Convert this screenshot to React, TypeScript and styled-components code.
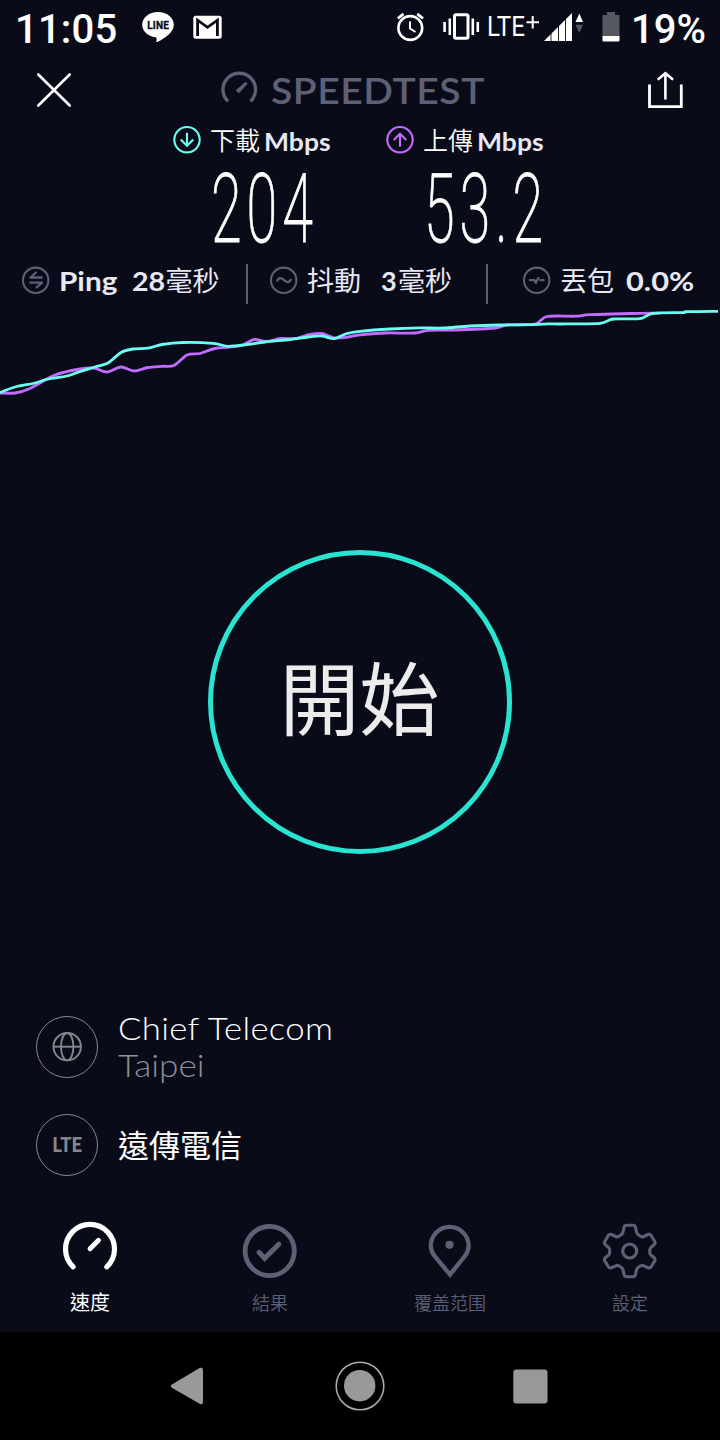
import React from 'react';
import styled, { createGlobalStyle } from 'styled-components';

const color = {
  bg: '#090b19',
  muted: '#5f6076',
  text: '#e8e8f4',
  cyan: '#6afff0',
  purple: '#c46bff',
  ring: '#2ae4d2',
  grey: '#86878d',
};

const latin = "Lato, 'Noto Sans CJK TC', sans-serif";
const cjk = "'Noto Sans CJK TC', sans-serif";

const GlobalStyle = createGlobalStyle`
  *, *::before, *::after { box-sizing: border-box; }
  body { margin: 0; background: ${color.bg}; }
  svg { display: block; flex: none; overflow: visible; }
`;

const Screen = styled.div`
  width: 720px;
  height: 1440px;
  display: flex;
  flex-direction: column;
  overflow: hidden;
  background: ${color.bg};
  color: #fff;
  font-family: ${latin};
`;

type LabelProps = {
  $size: number;
  $width?: number;
  $weight?: number;
  $color?: string;
  $spacing?: number;
  $stretch?: number;
  $family?: string;
};

const Label = styled.span<LabelProps>`
  display: block;
  flex: none;
  width: ${(p) => (p.$width ? `${p.$width}px` : 'auto')};
  font-family: ${(p) => p.$family ?? latin};
  font-size: ${(p) => p.$size}px;
  font-weight: ${(p) => p.$weight ?? 400};
  letter-spacing: ${(p) => p.$spacing ?? 0}px;
  line-height: 1;
  white-space: nowrap;
  color: ${(p) => p.$color ?? '#fff'};
  transform: scaleX(${(p) => p.$stretch ?? 1});
  transform-origin: left center;
`;

/* The CJK face sits low in its line box, so it gets extra space below. */
const CjkLabel = styled(Label).attrs({ $family: cjk })<{ $lift?: number }>`
  margin-top: -${(p) => p.$lift ?? 1}px;
  margin-bottom: ${(p) => p.$lift ?? 1}px;
`;

const StatusBar = styled.header`
  height: 56px;
  flex: none;
  display: flex;
  align-items: flex-start;
  padding: 0 0 0 15px;
`;

const Clock = styled.div`
  width: 127px;
  padding-top: 10px;
`;

const StatusIcons = styled.div`
  width: 238px;
  display: flex;
  gap: 19px;
  padding-top: 11px;
`;

const StatusGlyphs = styled.div`
  padding-top: 12px;
  width: 251px;
`;

const Percent = styled.div`
  padding-top: 10px;
`;

const TitleBar = styled.div`
  height: 68px;
  flex: none;
  display: flex;
  align-items: flex-start;
  padding: 14px 36px 0 36px;
`;

const Brand = styled.div`
  display: flex;
  gap: 13px;
  margin-left: 148px;
  width: 426px;
`;

const BrandName = styled.div`
  padding-top: 2px;
`;

const Results = styled.section`
  height: 140px;
  flex: none;
  display: flex;
  padding-left: 173px;
`;

const Result = styled.div`
  width: 213px;
`;

const ResultHead = styled.div`
  display: flex;
  align-items: center;
  height: 32px;
  gap: 9px;
`;

const ResultName = styled.div`
  display: flex;
  gap: 4px;
  padding-top: 3px;
`;

const Value = styled.div`
  margin-left: 38px;
  padding-top: 4px;
  font-family: Roboto, sans-serif;
  font-weight: 200;
  font-size: 96px;
  line-height: 98px;
  letter-spacing: 8.5px;
  -webkit-text-stroke: 0.9px #fff;
  white-space: nowrap;
  transform: scaleX(0.58);
  transform-origin: left center;
`;

const Metrics = styled.section`
  height: 40px;
  flex: none;
  display: flex;
`;

const Metric = styled.div<{ $width: number; $pad: number; $last?: boolean }>`
  width: ${(p) => p.$width}px;
  height: 40px;
  padding: 2px 0 0 ${(p) => p.$pad}px;
  display: flex;
  align-items: flex-start;
  border-right: ${(p) => (p.$last ? 0 : 2)}px solid ${color.muted};
`;

const MetricTexts = styled.div`
  display: flex;
  padding: 1px 0 0 9px;
`;

const StartArea = styled.main`
  height: 612px;
  flex: none;
  display: flex;
  justify-content: center;
  padding-top: 146px;
`;

const StartButton = styled.button`
  width: 304px;
  height: 304px;
  padding: 0 1px 17px 0;
  border: 5px solid ${color.ring};
  border-radius: 50%;
  background: transparent;
  color: #ececec;
  font: 400 80px/1 ${cjk};
`;

const Servers = styled.section`
  flex: none;
  height: 194px;
  padding-left: 36px;
  display: flex;
  flex-direction: column;
  gap: 36px;
`;

const Server = styled.div`
  height: 62px;
  display: flex;
  align-items: center;
  gap: 20px;
`;

const Badge = styled.div`
  width: 62px;
  height: 62px;
  flex: none;
  display: flex;
  align-items: center;
  justify-content: center;
  border: 1.5px solid ${color.grey};
  border-radius: 50%;
`;

const BadgeText = styled.span`
  padding-bottom: 3px;
  font: 900 20px/1 ${latin};
  color: ${color.grey};
  transform: scaleX(0.93);
`;

const ServerText = styled.div`
  display: flex;
  flex-direction: column;
  gap: 5px;
  padding-bottom: 1px;
`;

const Tabs = styled.nav`
  height: 122px;
  flex: none;
  display: flex;
`;

const Tab = styled.div`
  width: 180px;
  display: flex;
  flex-direction: column;
  align-items: center;
  padding-top: 12px;
`;

const TabName = styled.div`
  height: 28px;
  margin-top: 6px;
  display: flex;
  align-items: center;
`;

const SystemNav = styled.footer`
  height: 108px;
  flex: none;
  display: flex;
  align-items: center;
  padding-left: 170px;
  background: #000;
`;

const NavSlot = styled.div<{ $width: number }>`
  width: ${(p) => p.$width}px;
`;

type Point = [number, number];

const download: Point[] = [
  [0, 392.5], [15, 387], [35, 383], [48, 379], [67, 376], [80, 371.5], [95, 367], [108, 363],
  [121, 352.5], [133, 349], [148, 348.2], [162, 344.5], [183, 342.5], [213, 343.3], [228, 346.3],
  [245, 344.8], [265, 342], [290, 339.5], [308, 337], [322, 336], [334, 338.6], [347, 333.5],
  [360, 331.3], [390, 329], [420, 327.9], [443, 328], [470, 326], [500, 325], [535, 324.6],
  [548, 323.8], [560, 324], [600, 323.3], [613, 319], [640, 318.7], [653, 313.3], [684, 312.6],
  [686, 311.7], [718, 311.3],
];

const upload: Point[] = [
  [0, 393], [15, 393], [30, 388.5], [55, 375], [80, 369], [94, 368], [107, 372], [121, 367],
  [134, 371], [148, 367.5], [162, 366.3], [174, 365.5], [187, 355], [200, 353.5], [215, 348.5],
  [240, 346], [254, 339.5], [267, 341.5], [280, 338.5], [295, 338.5], [310, 334.5], [322, 333.5],
  [335, 338], [348, 337], [360, 334.8], [385, 333], [415, 333], [428, 330.3], [455, 330],
  [495, 328], [507, 325], [535, 324], [547, 316.5], [575, 316.2], [590, 314.7], [630, 313.5],
  [660, 313.1],
];

function curve(points: Point[]) {
  return points.reduce((d, [x, y], i) => {
    if (i === 0) return `M${x} ${y}`;
    const [px, py] = points[i - 1];
    const [bx, by] = points[Math.max(0, i - 2)];
    const [nx, ny] = points[Math.min(points.length - 1, i + 1)];
    const k = 1 / 7;
    return `${d}C${px + (x - bx) * k} ${py + (y - by) * k} ${x - (nx - px) * k} ${y - (ny - py) * k} ${x} ${y}`;
  }, '');
}

function Chart() {
  return (
    <svg width="720" height="100" viewBox="0 304 720 100" fill="none" strokeWidth="2.8">
      <path d={curve(upload)} stroke={color.purple} />
      <path d={curve(download)} stroke={color.cyan} />
    </svg>
  );
}

function LineIcon() {
  return (
    <svg width="32" height="32" viewBox="0 0 32 32">
      <path
        d="M16 1C7.3 1 .2 6.5.2 13.7c0 6.400 5.600 11.600 13.200 12.500 1.600.300 1.300 1.200 1 4.200-.1.700.4.900 1 .6C19.500 28.800 31.800 22.500 31.800 13.700 31.800 6.500 24.700 1 16 1z"
        fill="#fff"
      />
      <text x="16" y="18" textAnchor="middle" textLength="21.500" fontFamily="Roboto, sans-serif" fontWeight="700" fontSize="10" fill={color.bg} stroke={color.bg} strokeWidth=".3">
        LINE
      </text>
    </svg>
  );
}

function MailIcon() {
  return (
    <svg width="29" height="32" viewBox="0 0 29 32">
      <rect x=".3" y="4.700" width="28.400" height="23" rx="2.500" fill="#fff" />
      <path d="M4.600 25V9.200L14.500 16.300 24.400 9.200V25" fill="none" stroke={color.bg} strokeWidth="2.800" />
    </svg>
  );
}

function StatusIndicators() {
  return (
    <svg width="245" height="32" viewBox="380 12 245 32" fill="none" stroke="#fff">
      <circle cx="410.300" cy="28" r="11.900" strokeWidth="2.600" />
      <path d="M410 21.500V28.500L415.500 32" strokeWidth="2" />
      <path d="M397.800 18.500L403.500 13.800M423 18.500L417.300 13.800" strokeWidth="2.800" />
      <rect x="454.500" y="14.800" width="13.500" height="23.500" rx="1.500" strokeWidth="3" />
      <path d="M449.800 18.500V35M472.800 18.500V35" strokeWidth="2.600" />
      <path d="M444.600 22V32M477.800 22V32" strokeWidth="2.600" />
      <text x="487" y="36.200" textLength="38" lengthAdjust="spacingAndGlyphs" fontFamily="Roboto, sans-serif" fontSize="27.500" fill="#fff" stroke="none">
        LTE
      </text>
      <path d="M526.500 22.300H539M532.700 16V28.500" strokeWidth="2" />
      <path d="M544 41L572 13V41z" fill="#fff" stroke="none" />
      <path d="M551 31V41.500M558.500 23V41.500M565.500 17V41.500" stroke={color.bg} strokeWidth=".9" />
      <path d="M575.500 22L579.300 13.500 583 22z" fill="#fff" stroke="none" />
      <path d="M575.500 24.800L579.300 33 583 24.800z" fill="#55565e" stroke="none" />
      <path d="M602.500 15H607V12H615V15H619.500V37H602.500z" fill="#57585f" stroke="none" />
      <path d="M602.500 36H619.500V40.500Q619.500 41.500 618.500 41.500H603.500Q602.500 41.500 602.500 40.500z" fill="#fff" stroke="none" />
    </svg>
  );
}

function CloseIcon() {
  return (
    <svg width="36" height="40" viewBox="0 0 36 40" fill="none" stroke="#fff" strokeWidth="2.600" strokeLinecap="round">
      <path d="M2.300 4.500L33.700 35.500M33.700 4.500L2.300 35.500" />
    </svg>
  );
}

function BrandIcon() {
  return (
    <svg width="38" height="36" viewBox="0 0 38 36" fill="none" stroke={color.muted}>
      <path d="M8 31.300A16.300 16.300 0 1 1 30.500 31.300" strokeWidth="3.400" />
      <path d="M17.800 22.400L15.800 20.300 25.500 11.800 27.600 13.700 18.800 23.200z" fill={color.muted} stroke="none" />
    </svg>
  );
}

function ShareIcon() {
  return (
    <svg width="38" height="40" viewBox="0 0 38 40" fill="none" stroke="#fff" strokeWidth="2.800">
      <path d="M3.500 14.500V36.700H35.300V14.500" />
      <path d="M19.400 28.500V4M12.500 9L19.400 3.300 26.300 9" strokeLinecap="round" strokeWidth="2.600" />
    </svg>
  );
}

function ArrowIcon({ up }: { up?: boolean }) {
  return (
    <svg width="28" height="28" viewBox="0 0 28 28" fill="none" stroke={up ? color.purple : color.cyan} strokeWidth="2.100">
      <circle cx="14" cy="13.700" r="12.700" />
      <path d={up ? 'M14 20.700V8.200M7.700 14L14 7.700 20.300 14' : 'M14 6.700V19.200M7.700 13.400L14 19.700 20.300 13.400'} />
    </svg>
  );
}

const metricPaths = {
  ping: 'M20.500 11.500H8.500L14.500 6M7.500 16.700H20L14 22',
  jitter: 'M6.800 15.200C8.800 11 11.500 11.400 14 14S19.200 17.200 21.200 13',
  loss: 'M6 14.200H11.500L12.800 16.800 15.800 11.300M16.500 14.200H21.500',
};

function MetricIcon({ kind }: { kind: keyof typeof metricPaths }) {
  return (
    <svg width="28" height="28" viewBox="0 0 28 28" fill="none" stroke={color.muted} strokeWidth="2.100">
      <circle cx="13.700" cy="14.300" r="12.700" />
      <path d={metricPaths[kind]} strokeLinejoin="round" strokeWidth="2.300" />
    </svg>
  );
}

function GlobeIcon() {
  return (
    <svg width="30" height="30" viewBox="0 0 30 30" fill="none" stroke={color.grey} strokeWidth="1.900">
      <circle cx="15.200" cy="14.700" r="13.700" />
      <ellipse cx="15.200" cy="14.700" rx="6.200" ry="13.700" />
      <path d="M1.500 14.700H28.900" />
    </svg>
  );
}

function TabIcon({ kind }: { kind: 'speed' | 'results' | 'coverage' | 'settings' }) {
  const stroke = kind === 'speed' ? '#fff' : color.muted;
  return (
    <svg width="60" height="60" viewBox="0 0 60 60" fill="none" stroke={stroke} strokeWidth="4.800" strokeLinecap="round">
      {kind === 'speed' && (
        <>
          <path d="M13.200 44.800A24.500 24.500 0 1 1 46.800 44.800" strokeWidth="5.200" />
          <path d="M30 26.800L38.500 18.300" strokeWidth="4.800" />
        </>
      )}
      {kind === 'results' && (
        <>
          <circle cx="29.700" cy="29" r="24.600" />
          <path d="M19 30.300L24.700 36.300 38.800 22.200" strokeWidth="5" />
        </>
      )}
      {kind === 'coverage' && (
        <>
          <path d="M30 52.600L14.500 34C11.500 30.200 10.800 27.200 10.800 23.800A18.900 18.900 0 0 1 48.600 23.800C48.600 27.200 47.900 30.200 44.900 34z" strokeWidth="4.300" strokeLinecap="butt" />
          <circle cx="29.500" cy="22.800" r="4.100" fill={stroke} stroke="none" />
        </>
      )}
      {kind === 'settings' && (
        <>
          <path
            d="M24 5.500Q24.500 3.300 26.500 3.300H33Q35 3.300 35.500 5.500L36.500 10.200Q37 12 38.700 13L41 14.500Q42 15.100 43.300 14.700L48 12.500Q50 11.800 51.200 13.500L54.700 19.500Q55.800 21.300 54.200 22.700L50.800 25.500Q49.800 26.500 49.800 28V30.500Q49.800 32 50.800 33L54.200 35.700Q55.800 37.100 54.700 38.900L51.200 44.700Q50 46.400 48 45.700L43.300 43.600Q42 43.200 41 43.700L38.700 45Q37 46 36.500 47.800L35.500 52.500Q35 54.700 33 54.700H26.500Q24.500 54.700 24 52.500L23 47.800Q22.500 46 20.800 45L18.500 43.700Q17.500 43.200 16.200 43.600L11.500 45.700Q9.500 46.400 8.300 44.700L4.800 38.900Q3.700 37.100 5.300 35.700L8.700 33Q9.700 32 9.700 30.500V28Q9.700 26.500 8.700 25.500L5.300 22.700Q3.700 21.300 4.800 19.500L8.300 13.500Q9.500 11.800 11.500 12.500L16.200 14.700Q17.500 15.100 18.500 14.500L20.800 13Q22.500 12 23 10.200z"
            strokeWidth="3.100"
          />
          <circle cx="29.700" cy="29" r="7" strokeWidth="3.200" />
        </>
      )}
    </svg>
  );
}

const tabs = [
  { kind: 'speed', name: '速度' },
  { kind: 'results', name: '結果' },
  { kind: 'coverage', name: '覆盖范围' },
  { kind: 'settings', name: '設定' },
] as const;

export default function App() {
  return (
    <Screen>
      <GlobalStyle />
      <StatusBar>
        <Clock>
          <Label $size={40} $weight={500} $family="Roboto, sans-serif" $spacing={0.2}>11:05</Label>
        </Clock>
        <StatusIcons>
          <LineIcon />
          <MailIcon />
        </StatusIcons>
        <StatusGlyphs>
          <StatusIndicators />
        </StatusGlyphs>
        <Percent>
          <Label $size={40} $weight={500} $family="Roboto, sans-serif">19%</Label>
        </Percent>
      </StatusBar>

      <TitleBar>
        <CloseIcon />
        <Brand>
          <BrandIcon />
          <BrandName>
            <Label $size={36} $weight={600} $color={color.muted} $spacing={0.5} $stretch={1.085}>SPEEDTEST</Label>
          </BrandName>
        </Brand>
        <ShareIcon />
      </TitleBar>

      <Results>
        <Result>
          <ResultHead>
            <ArrowIcon />
            <ResultName>
              <CjkLabel $size={25} $weight={350} $lift={2}>下載</CjkLabel>
              <Label $size={25} $weight={700} $color={color.text} $stretch={1.06}>Mbps</Label>
            </ResultName>
          </ResultHead>
          <Value>204</Value>
        </Result>
        <Result>
          <ResultHead>
            <ArrowIcon up />
            <ResultName>
              <CjkLabel $size={25} $weight={350} $lift={2}>上傳</CjkLabel>
              <Label $size={25} $weight={700} $color={color.text} $stretch={1.06}>Mbps</Label>
            </ResultName>
          </ResultHead>
          <Value>53.2</Value>
        </Result>
      </Results>

      <Metrics>
        <Metric $width={248} $pad={22}>
          <MetricIcon kind="ping" />
          <MetricTexts>
            <Label $size={27} $width={73} $weight={700} $color={color.text} $stretch={1.1}>Ping</Label>
            <Label $size={27} $width={33.5} $weight={700} $color={color.text} $stretch={1.06}>28</Label>
            <CjkLabel $size={27} $color={color.text}>毫秒</CjkLabel>
          </MetricTexts>
        </Metric>
        <Metric $width={240} $pad={22}>
          <MetricIcon kind="jitter" />
          <MetricTexts>
            <CjkLabel $size={27} $width={74} $color={color.text}>抖動</CjkLabel>
            <Label $size={27} $width={17} $weight={700} $color={color.text}>3</Label>
            <CjkLabel $size={27} $color={color.text}>毫秒</CjkLabel>
          </MetricTexts>
        </Metric>
        <Metric $width={232} $pad={35} $last>
          <MetricIcon kind="loss" />
          <MetricTexts>
            <CjkLabel $size={27} $width={66} $color={color.text}>丟包</CjkLabel>
            <Label $size={27} $weight={700} $color={color.text} $stretch={1.14}>0.0%</Label>
          </MetricTexts>
        </Metric>
      </Metrics>

      <Chart />

      <StartArea>
        <StartButton>開始</StartButton>
      </StartArea>

      <Servers>
        <Server>
          <Badge>
            <GlobeIcon />
          </Badge>
          <ServerText>
            <Label $size={32} $weight={300} $spacing={0.3} $stretch={1.085}>Chief Telecom</Label>
            <Label $size={32} $weight={300} $color="#8f8f94" $stretch={1.1}>Taipei</Label>
          </ServerText>
        </Server>
        <Server>
          <Badge>
            <BadgeText>LTE</BadgeText>
          </Badge>
          <CjkLabel $size={31} $lift={2}>遠傳電信</CjkLabel>
        </Server>
      </Servers>

      <Tabs>
        {tabs.map(({ kind, name }) => (
          <Tab key={kind}>
            <TabIcon kind={kind} />
            <TabName>
              <Label
                $size={kind === 'speed' ? 20 : 18}
                $color={kind === 'speed' ? '#fff' : color.muted}
                $family={cjk}
                $weight={kind === 'speed' ? 400 : 350}
              >
                {name}
              </Label>
            </TabName>
          </Tab>
        ))}
      </Tabs>

      <SystemNav>
        <NavSlot $width={165}>
          <svg width="34" height="38" viewBox="0 0 34 38">
            <path d="M1.500 17.800L30 .8Q33 0 33 3V35Q33 38 30 37L1.500 20.500Q0 19.200 1.500 17.800z" fill="#999" />
          </svg>
        </NavSlot>
        <NavSlot $width={178}>
          <svg width="50" height="50" viewBox="0 0 50 50">
            <circle cx="25" cy="25" r="23.800" fill="none" stroke="#aaa" strokeWidth="1.600" />
            <circle cx="24.700" cy="24.700" r="15.700" fill="#999" />
          </svg>
        </NavSlot>
        <svg width="35" height="35" viewBox="0 0 35 35">
          <rect x=".3" y=".5" width="34.200" height="34" rx="3" fill="#999" />
        </svg>
      </SystemNav>
    </Screen>
  );
}
